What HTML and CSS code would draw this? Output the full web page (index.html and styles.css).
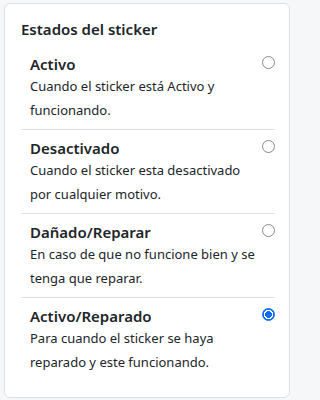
FILE: index.html
```html
<!DOCTYPE html>
<html lang="es">
<head>
<meta charset="utf-8">
<link rel="stylesheet" href="styles.css">
</head>
<body>
<div class="card">
  <h5 class="card-title">Estados del sticker</h5>
  <ul class="list">
    <li class="item">
      <div class="text">
        <div class="item-title">Activo</div>
        <div class="item-desc">Cuando el sticker está Activo y funcionando.</div>
      </div>
      <span class="radio"></span>
    </li>
    <li class="item">
      <div class="text">
        <div class="item-title">Desactivado</div>
        <div class="item-desc">Cuando el sticker esta desactivado por cualquier motivo.</div>
      </div>
      <span class="radio"></span>
    </li>
    <li class="item">
      <div class="text">
        <div class="item-title">Dañado/Reparar</div>
        <div class="item-desc">En caso de que no funcione bien y se tenga que reparar.</div>
      </div>
      <span class="radio"></span>
    </li>
    <li class="item">
      <div class="text">
        <div class="item-title">Activo/Reparado</div>
        <div class="item-desc">Para cuando el sticker se haya reparado y este funcionando.</div>
      </div>
      <span class="radio checked"></span>
    </li>
  </ul>
</div>
</body>
</html>
```
FILE: styles.css
```css
html, body {
  margin: 0;
  padding: 0;
}
body {
  background: #f6f7f9;
  font-family: "Noto Sans", "Open Sans", sans-serif;
  color: #212529;
  padding: 3px 2px 2px 4px;
}
.card {
  background: #fff;
  border: 1px solid #dcdfe3;
  border-radius: 6px;
  padding: 16px 14px 16px 16px;
  box-sizing: border-box;
  width: 286px;
  height: 395px;
}
.card-title {
  margin: 0 0 7px 0;
  font-size: 15px;
  font-weight: 600;
  line-height: 19px;
}
.list {
  list-style: none;
  margin: 0;
  padding: 0;
}
.item {
  display: flex;
  align-items: flex-start;
  padding: 9px 0 8px 9px;
  border-bottom: 1px solid #dee2e6;
  height: 84px;
  box-sizing: border-box;
}
.item:last-child {
  border-bottom: none;
}
.text {
  flex: 1;
  min-width: 0;
}
.item-title {
  font-size: 15px;
  font-weight: 600;
  line-height: 19px;
}
.item-desc {
  font-size: 13px;
  line-height: 24px;
}
.radio {
  flex: none;
  width: 13px;
  height: 13px;
  border: 1px solid #8a8a8a;
  border-radius: 50%;
  box-sizing: border-box;
  margin: 0.5px 0 0 3px;
  background: #fff;
}
.radio.checked {
  border-color: #0d6efd;
  background: radial-gradient(circle, #0d6efd 0 3.2px, #fff 3.6px 4.6px, #0d6efd 5px);
}
```
